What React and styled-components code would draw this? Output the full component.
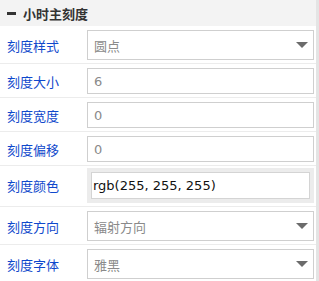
import React from 'react'
import styled, { createGlobalStyle } from 'styled-components'

const GlobalStyle = createGlobalStyle`
  html, body {
    margin: 0;
    padding: 0;
    background: #fff;
  }
  body {
    font-family: "DejaVu Sans", "Noto Sans CJK SC", sans-serif;
    font-size: 13px;
  }
`

const Page = styled.div`
  display: flex;
  width: 319px;
  height: 281px;
  overflow: hidden;
`

const Panel = styled.div`
  width: 316px;
  display: flex;
  flex-direction: column;
`

const Track = styled.div`
  width: 3px;
  background: #e4e4e4;
`

const Header = styled.div`
  height: 26px;
  flex-shrink: 0;
  display: flex;
  align-items: center;
  gap: 7px;
  padding-left: 7px;
  background: #f3f3f3;
`

const Minus = styled.span`
  width: 9px;
  height: 3px;
  background: #333;
`

const Title = styled.span`
  font-family: "Noto Sans CJK SC", sans-serif;
  font-weight: 700;
  font-size: 13px;
  color: #333;
`

const Row = styled.div`
  display: grid;
  grid-template-columns: 87px 1fr;
  align-items: center;
  padding: ${(p) => (p.$tight ? '2px' : '4px')} 2px 3px 0;
  border-bottom: 1px solid #ececec;
  flex-shrink: 0;
`

const Label = styled.span`
  padding-left: 7px;
  font-family: "Noto Sans CJK SC", sans-serif;
  font-size: 13px;
  color: #0f48cc;
`

const Box = styled.div`
  height: ${(p) => (p.$select ? 30 : 26)}px;
  box-sizing: border-box;
  border: 1px solid #cfcfcf;
  background: #fff;
  display: flex;
  align-items: center;
  justify-content: space-between;
  padding: 0 5px 0 6px;
  font-family: "DejaVu Sans", "Noto Sans CJK SC", sans-serif;
  font-size: 13px;
  color: #8a8a8a;
`

const Arrow = styled.span`
  width: 0;
  height: 0;
  border-left: 6px solid transparent;
  border-right: 6px solid transparent;
  border-top: 6px solid #6b6b6b;
`

const ColorWrap = styled.div`
  background: #ececec;
  padding: 4px;
`

const ColorInput = styled.div`
  height: 27px;
  box-sizing: border-box;
  border: 1px solid #d4d4d4;
  background: #fff;
  display: flex;
  align-items: center;
  padding-left: 1px;
  font-family: "DejaVu Sans", sans-serif;
  font-size: 13px;
  color: #111;
`

const fields = [
  { label: '刻度样式', value: '圆点', select: true },
  { label: '刻度大小', value: '6' },
  { label: '刻度宽度', value: '0' },
  { label: '刻度偏移', value: '0' },
  { label: '刻度颜色', value: 'rgb(255, 255, 255)', color: true },
  { label: '刻度方向', value: '辐射方向', select: true },
  { label: '刻度字体', value: '雅黑', select: true },
]

export default function App() {
  return (
    <>
      <GlobalStyle />
      <Page>
        <Panel>
          <Header>
            <Minus />
            <Title>小时主刻度</Title>
          </Header>
          {fields.map((f) => (
            <Row key={f.label} $tight={f.color}>
              <Label>{f.label}</Label>
              {f.color ? (
                <ColorWrap>
                  <ColorInput>{f.value}</ColorInput>
                </ColorWrap>
              ) : (
                <Box $select={f.select}>
                  <span>{f.value}</span>
                  {f.select && <Arrow />}
                </Box>
              )}
            </Row>
          ))}
        </Panel>
        <Track />
      </Page>
    </>
  )
}
